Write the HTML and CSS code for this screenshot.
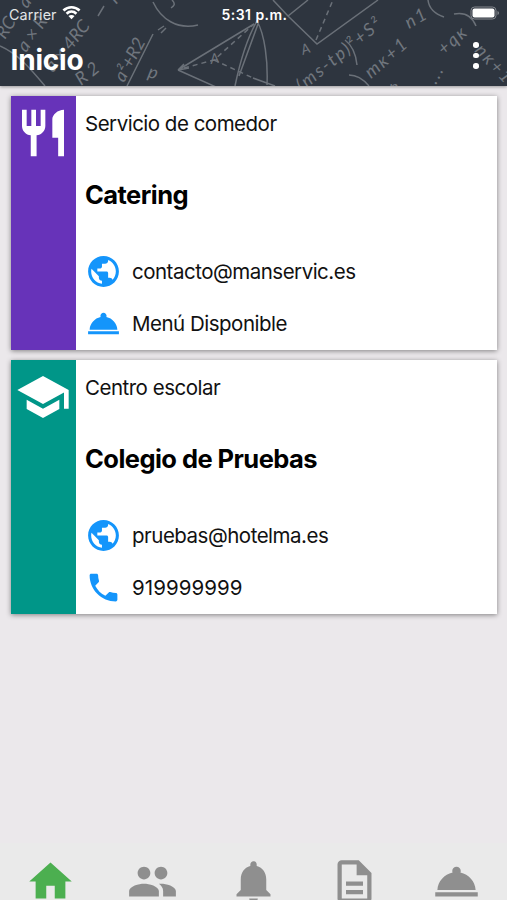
FILE: index.html
```html
<!DOCTYPE html>
<html lang="es">
<head>
<meta charset="utf-8">
<meta name="viewport" content="width=device-width, initial-scale=1">
<title>Inicio</title>
<link rel="stylesheet" href="styles.css">
</head>
<body>
<svg class="defs" width="0" height="0" aria-hidden="true">
  <symbol id="globe" viewBox="0 0 24 24"><path d="M12 2C6.48 2 2 6.48 2 12s4.48 10 10 10 10-4.48 10-10S17.52 2 12 2zm-1 17.93c-3.95-.49-7-3.85-7-7.93 0-.62.08-1.21.21-1.79L9 15v1c0 1.1.9 2 2 2v1.93zm6.900-2.540c-.26-.81-1-1.390-1.900-1.390h-1v-3c0-.55-.45-1-1-1H8v-2h2c.55 0 1-.45 1-1V7h2c1.100 0 2-.9 2-2v-.41c2.930 1.190 5 4.060 5 7.410 0 2.080-.8 3.970-2.100 5.390z"/></symbol>
  <symbol id="cloche" viewBox="0 0 24 24"><path d="M2 17h20v2H2zm11.840-9.210c.1-.24.16-.51.16-.79 0-1.100-.9-2-2-2s-2 .9-2 2c0 .28.06.55.16.79C6.250 8.600 3.270 11.930 3 16h18c-.27-4.070-3.250-7.400-7.160-8.210z"/></symbol>
</svg>
<div class="app">
  <header class="header">
    <svg class="doodles" viewBox="0 0 507 86" aria-hidden="true">
      <g class="lines">
        <path d="M0 46C18 54 30 68 45 86M127 86L153 34M153 2C161 19 177 30 198 25M172 0c4 4 2 6-1 8M178 70L254 24M178 70L216 87M178 70l11-2M178 70l6-6M235 86C240 62 246 40 257 21C265 35 268 62 267 85M239 76L258 24M253 78l22 8M273 0L288 16L308 0M288 16L317 44L378 0M428 0c1 9 7 14 16 17M454 14c10-2 18 2 22 12M349 75c8 0 15 5 20 11M345 40c8 6 11 15 12 25M98 16l6-10M158 30l6-4M161 33l5-5"/>
        <path class="dash" d="M184 68L214 60L254 24M214 60L253 78M316 40L333 0"/>
      </g>
      <g class="scribble">
        <text transform="translate(27 9) rotate(-55)">a</text>
        <text transform="translate(5 40) rotate(-58)">RC</text>
        <text transform="translate(26 53) rotate(-55)">a × R</text>
        <text transform="translate(53 73) rotate(-51)">a × 4RC</text>
        <text transform="translate(116 5) rotate(-48)">R</text>
        <text transform="translate(81 86) rotate(-38)">R 2</text>
        <text transform="translate(124 83) rotate(-62)">a²+R2</text>
        <text transform="translate(147 77) rotate(15)">p</text>
        <text class="small" transform="translate(211 64) rotate(-10)">A</text>
        <text class="small" transform="translate(303 55) rotate(-20)">A</text>
        <text class="wide" transform="translate(302 92) rotate(-39)">(ms-tp)²+S²</text>
        <text class="wide" transform="translate(371 79) rotate(-41)">mĸ+1</text>
        <text class="wide" transform="translate(409 29) rotate(-30)">n1</text>
        <text transform="translate(389 93)">n</text>
        <text class="wide" transform="translate(436 85) rotate(-62)">...</text>
        <text class="wide" transform="translate(444 56) rotate(-42)">+qĸ</text>
        <text class="wide" transform="translate(474 51) rotate(47)">nĸ+1</text>
      </g>
    </svg>
    <div class="status">
      <span class="carrier">Carrier</span>
      <svg class="wifi" viewBox="0 0 20 16"><path d="M1.500 5.400C6.400.8 13.600.8 18.500 5.400M4.800 8.700c3-2.800 7.400-2.800 10.400 0"/><path class="tip" d="M6.800 11.200c1.900-1.600 4.500-1.600 6.400 0L10 14.500z"/></svg>
      <span class="clock">5:31 p.m.</span>
      <svg class="battery" viewBox="0 0 30 14"><rect class="shell" x="1" y="1" width="25" height="12" rx="3.500"/><rect class="charge" x="2.500" y="2.500" width="22" height="9" rx="2"/><path class="cap" d="M27.500 5c2 .8 2 3.200 0 4z"/></svg>
    </div>
    <div class="titlebar">
      <h1>Inicio</h1>
      <div class="more"><i></i><i></i><i></i></div>
    </div>
  </header>
  <main class="content">
    <section class="card">
      <div class="strip purple"><svg viewBox="0 0 24 24"><path d="M11 9H9V2H7v7H5V2H3v7c0 2.120 1.660 3.840 3.750 3.970V22h2.500v-9.030C11.340 12.840 13 11.120 13 9V2h-2v7zm5-3v8h2.500v8H21V2c-2.760 0-5 2.240-5 4z"/></svg></div>
      <div class="body">
        <p class="kind">Servicio de comedor</p>
        <h2>Catering</h2>
        <div class="row"><svg viewBox="0 0 24 24"><use href="#globe"/></svg><span>contacto@manservic.es</span></div>
        <div class="row"><svg viewBox="0 0 24 24"><use href="#cloche"/></svg><span>Menú Disponible</span></div>
      </div>
    </section>
    <section class="card">
      <div class="strip teal"><svg viewBox="0 0 24 24"><path d="M5 13.180v4L12 21l7-3.820v-4L12 17l-7-3.820zM12 3L1 9l11 6 9-4.910V17h2V9L12 3z"/></svg></div>
      <div class="body">
        <p class="kind">Centro escolar</p>
        <h2>Colegio de Pruebas</h2>
        <div class="row"><svg viewBox="0 0 24 24"><use href="#globe"/></svg><span>pruebas@hotelma.es</span></div>
        <div class="row"><svg viewBox="0 0 24 24"><path d="M6.620 10.790c1.440 2.830 3.760 5.140 6.590 6.590l2.200-2.200c.27-.27.67-.36 1.020-.24 1.120.37 2.330.57 3.570.57.55 0 1 .45 1 1V20c0 .55-.45 1-1 1-9.390 0-17-7.610-17-17 0-.55.45-1 1-1h3.500c.55 0 1 .45 1 1 0 1.250.2 2.450.57 3.570.11.35.03.74-.25 1.020l-2.200 2.200z"/></svg><span class="phone">919999999</span></div>
      </div>
    </section>
  </main>
  <nav class="tabs">
    <svg class="active" viewBox="0 0 24 24"><path d="M10 20v-6h4v6h5v-8h3L12 3 2 12h3v8z"/></svg>
    <svg viewBox="0 0 24 24"><path d="M16 11c1.660 0 2.990-1.340 2.990-3S17.660 5 16 5c-1.660 0-3 1.340-3 3s1.340 3 3 3zm-8 0c1.660 0 2.990-1.340 2.990-3S9.660 5 8 5C6.340 5 5 6.340 5 8s1.340 3 3 3zm0 2c-2.330 0-7 1.170-7 3.500V19h14v-2.500c0-2.330-4.670-3.500-7-3.500zm8 0c-.29 0-.62.02-.97.05 1.160.84 1.970 1.970 1.970 3.450V19h6v-2.500c0-2.330-4.670-3.500-7-3.500z"/></svg>
    <svg viewBox="0 0 24 24"><path d="M12 22c1.100 0 2-.9 2-2h-4c0 1.100.89 2 2 2zm6-6v-5c0-3.070-1.640-5.640-4.500-6.320V4c0-.83-.67-1.500-1.500-1.500s-1.500.67-1.500 1.500v.68C7.630 5.360 6 7.920 6 11v5l-2 2v1h16v-1l-2-2z"/></svg>
    <svg viewBox="0 0 24 24"><path d="M14 2H6c-1.100 0-2 .9-2 2v16c0 1.100.9 2 2 2h12c1.100 0 2-.9 2-2V8l-6-6zM6 20V4h7v5h5v11H6zM8 12h8v2H8zM8 16h8v2H8z"/></svg>
    <svg viewBox="0 0 24 24"><use href="#cloche"/></svg>
  </nav>
</div>
</body>
</html>
```
FILE: styles.css
```css
* { box-sizing: border-box; }
body { margin: 0; font-family: Inter, "Liberation Sans", sans-serif; color: #111; }
h1, h2, p { margin: 0; }
.defs { position: absolute; }
.app { height: 900px; display: flex; flex-direction: column; overflow: hidden; background: #ebe8eb; }

.header { position: relative; height: 86px; flex: none; background: #2e353f; color: #fff; box-shadow: 0 1px 3px rgba(0,0,0,.35); }
.doodles { position: absolute; inset: 0; width: 507px; height: 86px; overflow: hidden; }
.lines { fill: none; stroke: #6a7078; stroke-width: 1.5; }
.dash { stroke-dasharray: 5 4; }
.scribble { fill: #70767e; font: italic 400 18px Lato, sans-serif; }
.wide { letter-spacing: 2px; }
.small { font-size: 14px; }

.status { position: relative; display: grid; grid-template-columns: 49px 1fr auto 1fr 49px; align-items: center; height: 28px; padding: 0 7px 0 9px; }
.carrier { font-size: 14.3px; letter-spacing: .1px; color: #e3e5e7; }
.wifi { width: 19px; height: 16px; margin-left: 4px; margin-top: -2px; fill: none; stroke: #fff; stroke-width: 2.800; }
.wifi .tip { fill: #fff; stroke: none; }
.clock { font-size: 14px; font-weight: 600; letter-spacing: .45px; white-space: nowrap; }
.battery { grid-column: 5; justify-self: end; width: 30px; height: 14px; margin-top: -2px; }
.shell { fill: none; stroke: #85898f; }
.charge { fill: #fff; }
.cap { fill: #85898f; }
.titlebar { position: relative; display: flex; justify-content: space-between; align-items: center; padding: 0 28.500px 0 10.500px; height: 58px; }
h1 { font-size: 28px; line-height: 32px; font-weight: 700; letter-spacing: -.2px; margin-top: 5px; }
.more { display: flex; flex-direction: column; gap: 5px; margin-top: -3px; }
.more i { width: 5.500px; height: 5.500px; border-radius: 50%; background: #fff; }

.content { flex: 1; padding: 10px 10px 0 11px; display: flex; flex-direction: column; gap: 10px; }
.card { display: flex; height: 254px; background: #fff; box-shadow: 0 1px 5px rgba(0,0,0,.45); }
.strip { width: 64.500px; padding: 9px 0 0 4px; }
.strip svg { display: block; width: 56px; height: 56px; fill: #fff; }
.purple { background: #6733b9; }
.teal { background: #009688; }
.body { padding: 15px 0 0 9.500px; }
.kind { font-size: 20.500px; line-height: 26px; letter-spacing: -.5px; white-space: nowrap; }
h2 { font-size: 25.500px; line-height: 32px; font-weight: 700; letter-spacing: -.55px; color: #000; margin: 42px 0 35px; white-space: nowrap; }
.row { display: flex; align-items: center; height: 51.500px; font-size: 20.500px; letter-spacing: -.5px; white-space: nowrap; }
.row svg { width: 37px; height: 37px; fill: #1495fb; margin: 0 10.500px 0 -.5px; }
.phone { letter-spacing: .05px; }

.tabs { height: 57px; flex: none; display: grid; grid-template-columns: repeat(5, 1fr); justify-items: center; padding-top: 13px; background: #eaeaea; }
.tabs svg { width: 51px; height: 51px; fill: #8f8f8f; }
.tabs .active { fill: #4caf50; }
```
